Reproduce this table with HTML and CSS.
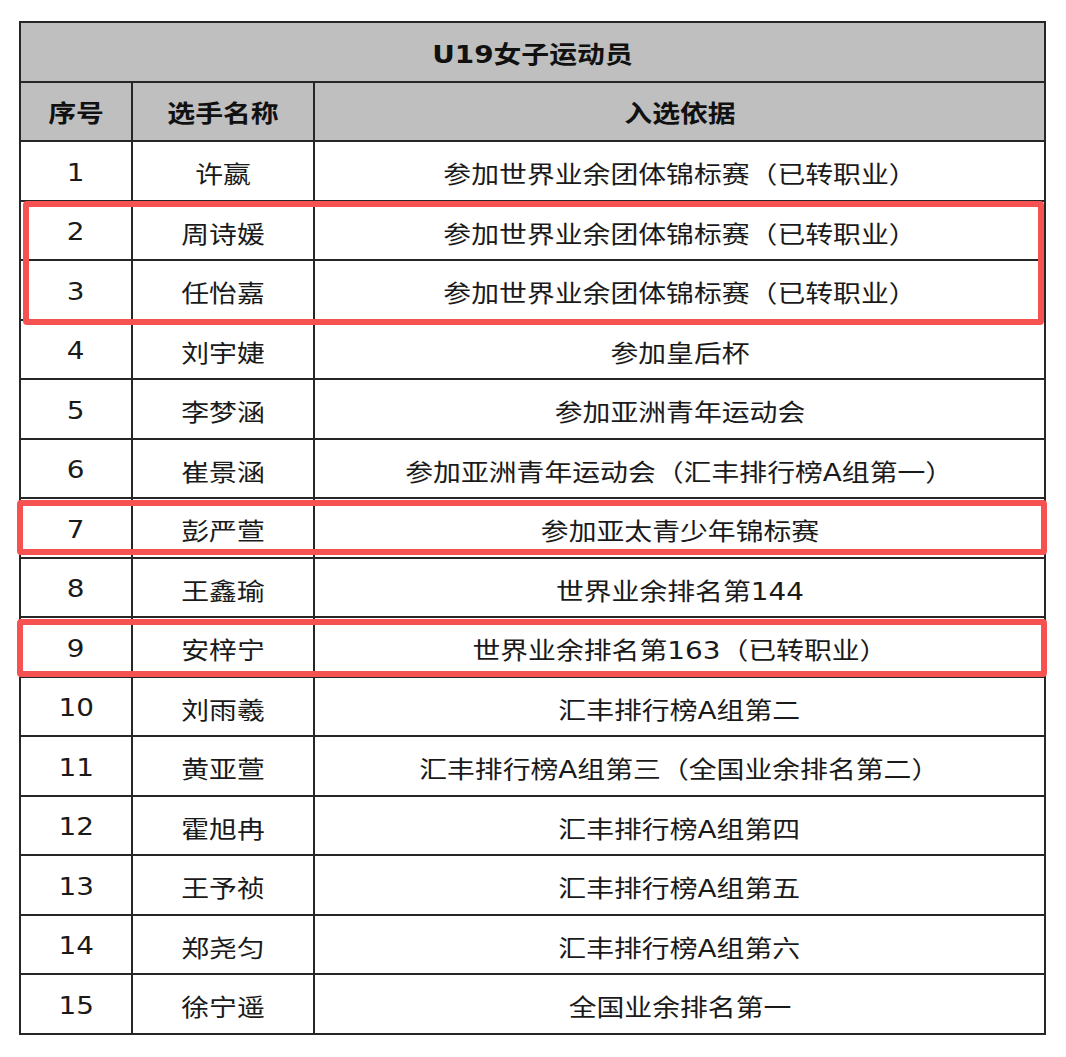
FILE: index.html
```html
<!DOCTYPE html>
<html lang="zh-CN">
<head>
<meta charset="utf-8">
<title>U19女子运动员</title>
<link rel="stylesheet" href="styles.css">
</head>
<body>
<div class="wrap">
  <table class="roster">
    <colgroup>
      <col class="c-no"><col class="c-name"><col class="c-reason">
    </colgroup>
    <thead>
      <tr class="title"><th colspan="3"><span class="t">U19女子运动员</span></th></tr>
      <tr class="head"><th><span class="t">序号</span></th><th><span class="t">选手名称</span></th><th><span class="t">入选依据</span></th></tr>
    </thead>
    <tbody>
      <tr><td><span class="t">1</span></td><td><span class="t">许嬴</span></td><td><span class="t">参加世界业余团体锦标赛（已转职业）</span></td></tr>
      <tr><td><span class="t">2</span></td><td><span class="t">周诗媛</span></td><td><span class="t">参加世界业余团体锦标赛（已转职业）</span></td></tr>
      <tr><td><span class="t">3</span></td><td><span class="t">任怡嘉</span></td><td><span class="t">参加世界业余团体锦标赛（已转职业）</span></td></tr>
      <tr><td><span class="t">4</span></td><td><span class="t">刘宇婕</span></td><td><span class="t">参加皇后杯</span></td></tr>
      <tr><td><span class="t">5</span></td><td><span class="t">李梦涵</span></td><td><span class="t">参加亚洲青年运动会</span></td></tr>
      <tr><td><span class="t">6</span></td><td><span class="t">崔景涵</span></td><td><span class="t">参加亚洲青年运动会（汇丰排行榜A组第一）</span></td></tr>
      <tr><td><span class="t">7</span></td><td><span class="t">彭严萱</span></td><td><span class="t">参加亚太青少年锦标赛</span></td></tr>
      <tr><td><span class="t">8</span></td><td><span class="t">王鑫瑜</span></td><td><span class="t">世界业余排名第144</span></td></tr>
      <tr><td><span class="t">9</span></td><td><span class="t">安梓宁</span></td><td><span class="t">世界业余排名第163（已转职业）</span></td></tr>
      <tr><td><span class="t">10</span></td><td><span class="t">刘雨羲</span></td><td><span class="t">汇丰排行榜A组第二</span></td></tr>
      <tr><td><span class="t">11</span></td><td><span class="t">黄亚萱</span></td><td><span class="t">汇丰排行榜A组第三（全国业余排名第二）</span></td></tr>
      <tr><td><span class="t">12</span></td><td><span class="t">霍旭冉</span></td><td><span class="t">汇丰排行榜A组第四</span></td></tr>
      <tr><td><span class="t">13</span></td><td><span class="t">王予祯</span></td><td><span class="t">汇丰排行榜A组第五</span></td></tr>
      <tr><td><span class="t">14</span></td><td><span class="t">郑尧匀</span></td><td><span class="t">汇丰排行榜A组第六</span></td></tr>
      <tr><td><span class="t">15</span></td><td><span class="t">徐宁遥</span></td><td><span class="t">全国业余排名第一</span></td></tr>
    </tbody>
  </table>
  <div class="mark mark-a"></div>
  <div class="mark mark-b"></div>
  <div class="mark mark-c"></div>
</div>
</body>
</html>
```

FILE: styles.css
```css
html, body {
  margin: 0;
  padding: 0;
  background: #ffffff;
}

.wrap {
  position: relative;
  padding: 21px 0 0 19px;
}

.roster {
  border-collapse: collapse;
  width: 1025px;
  table-layout: fixed;
  font-family: "DejaVu Sans", "Noto Sans CJK SC", sans-serif;
  font-size: 24px;
  color: #1a1a1a;
}

.c-no { width: 112px; }
.c-name { width: 182px; }
.c-reason { width: 731px; }

.roster th,
.roster td {
  border: 2px solid #262626;
  text-align: center;
  vertical-align: middle;
  padding: 0;
}

.roster thead th {
  background: #bfbfbf;
  font-weight: bold;
  color: #111111;
}

.roster tr.title th { height: 58px; }
.roster tr.head th { height: 57px; }
.roster tbody td { height: 59.5px; padding-top: 4px; box-sizing: border-box; }

.t {
  display: inline-block;
  transform: scaleX(1.16);
  white-space: nowrap;
}

.mark {
  position: absolute;
  border: 6px solid #f75252;
  border-radius: 4px;
  box-sizing: border-box;
}

.mark-a { left: 23px; top: 201px; width: 1021px; height: 124px; }
.mark-b { left: 17px; top: 500px; width: 1030px; height: 55px; }
.mark-c { left: 17px; top: 619px; width: 1030px; height: 58px; }
```
